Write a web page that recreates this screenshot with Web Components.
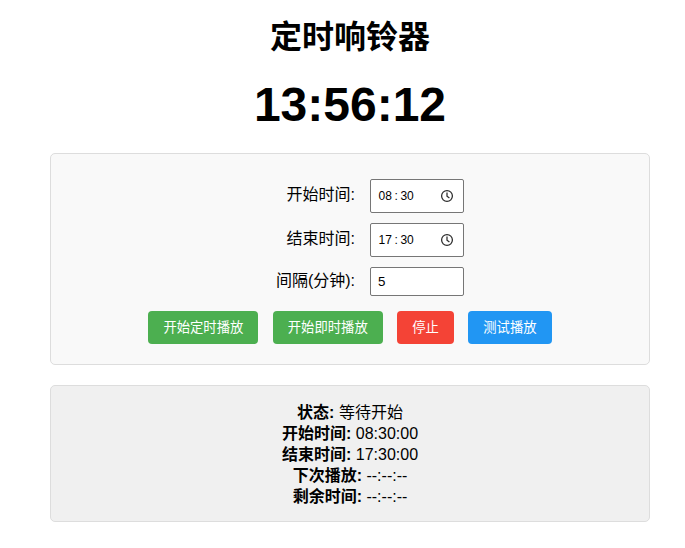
<!DOCTYPE html>
<html lang="zh">
<head>
<meta charset="utf-8">
<title>定时响铃器</title>
<style>
    html, body { margin: 0; background: #fff; }
    body {
        font-family: "Liberation Sans", "Noto Sans CJK SC", sans-serif;
        color: #000;
    }
</style>
</head>
<body>
<bell-app></bell-app>

<script>
class BellField extends HTMLElement {
    connectedCallback() {
        const type = this.getAttribute('type') || 'text';
        const value = this.getAttribute('value') || '';
        // the browser's own time input shows AM/PM here, so draw the 24h one by hand
        let control = `<input type="${type}" value="${value}">`;
        if (type === 'time') {
            const [h, m] = value.split(':');
            control = `
                <div class="time">
                    <span>${h}</span><span class="sep">:</span><span>${m}</span>
                    <svg width="14" height="14" viewBox="0 0 14 14" fill="none" stroke="#2b2b2b" stroke-width="1.25">
                        <circle cx="7" cy="7" r="5.4"/>
                        <path d="M7 3.6V7.2L9.4 9"/>
                    </svg>
                </div>`;
        }
        this.attachShadow({ mode: 'open' }).innerHTML = `
            <style>
                :host { display: flex; align-items: center; gap: 15px; }
                label { width: 304px; text-align: right; font-size: 16px; line-height: 18px; margin-top: -3px; }
                :host([type="number"]) label { margin-top: -1px; }
                input, .time {
                    box-sizing: border-box;
                    width: 94px;
                    margin: 0;
                    border: 1px solid #767676;
                    border-radius: 2px;
                    background: #fff;
                    font-family: "Liberation Sans", sans-serif;
                    font-size: 13.3333px;
                }
                input { height: 29px; padding: 6px 7px; }
                .time {
                    display: flex;
                    align-items: center;
                    height: 34px;
                    padding: 0 9px 0 7.5px;
                    font-size: 12px;
                }
                .time .sep { margin: 0 2.6px; }
                .time svg { margin-left: auto; }
            </style>
            <label><slot></slot></label>
            ${control}
        `;
    }
}

class BellButton extends HTMLElement {
    connectedCallback() {
        this.attachShadow({ mode: 'open' }).innerHTML = `
            <style>
                :host { display: block; }
                button {
                    padding: 10px 15px;
                    border: 0;
                    border-radius: 4px;
                    background: var(--bg, #4CAF50);
                    color: #fff;
                    font-family: "Liberation Sans", "Noto Sans CJK SC", sans-serif;
                    font-size: 13.3333px;
                    line-height: 13px;
                    height: 33px;
                }
            </style>
            <button><slot></slot></button>
        `;
    }
}

class BellStatus extends HTMLElement {
    connectedCallback() {
        this.attachShadow({ mode: 'open' }).innerHTML = `
            <style>
                :host {
                    display: block;
                    margin-top: 20px;
                    padding: 13px 15px 17px;
                    border: 1px solid #ddd;
                    border-radius: 5px;
                    background: #f0f0f0;
                    text-align: center;
                    font-size: 16px;
                }
                ::slotted(div) { height: 21px; }
            </style>
            <slot></slot>
        `;
    }
}

class BellApp extends HTMLElement {
    connectedCallback() {
        this.attachShadow({ mode: 'open' }).innerHTML = `
            <style>
                :host { display: block; width: 600px; margin-left: 50px; }
                h1 {
                    margin: 0;
                    padding-top: 19px;
                    font-size: 32px;
                    line-height: 37px;
                    text-align: center;
                }
                .clock {
                    margin-top: 21px;
                    font-size: 48px;
                    line-height: 55px;
                    font-weight: bold;
                    text-align: center;
                }
                .panel {
                    margin-top: 21px;
                    padding: 25px 0 20px;
                    border: 1px solid #ddd;
                    border-radius: 5px;
                    background: #f9f9f9;
                    display: flex;
                    flex-direction: column;
                    gap: 10px;
                }
                .buttons {
                    display: flex;
                    justify-content: center;
                    gap: 14.45px;
                    margin-top: 5px;
                }
                bell-button.stop { --bg: #f44336; }
                bell-button.test { --bg: #2196F3; }
            </style>
            <h1>定时响铃器</h1>
            <div class="clock" id="clock">13:56:12</div>
            <div class="panel">
                <bell-field type="time" value="08:30">开始时间:</bell-field>
                <bell-field type="time" value="17:30">结束时间:</bell-field>
                <bell-field type="number" value="5">间隔(分钟):</bell-field>
                <div class="buttons">
                    <bell-button>开始定时播放</bell-button>
                    <bell-button>开始即时播放</bell-button>
                    <bell-button class="stop">停止</bell-button>
                    <bell-button class="test">测试播放</bell-button>
                </div>
            </div>
            <bell-status>
                <div><strong>状态:</strong> 等待开始</div>
                <div><strong>开始时间:</strong> 08:30:00</div>
                <div><strong>结束时间:</strong> 17:30:00</div>
                <div><strong>下次播放:</strong> --:--:--</div>
                <div><strong>剩余时间:</strong> --:--:--</div>
            </bell-status>
        `;
    }
}

customElements.define('bell-field', BellField);
customElements.define('bell-button', BellButton);
customElements.define('bell-status', BellStatus);
customElements.define('bell-app', BellApp);
</script>
</body>
</html>
